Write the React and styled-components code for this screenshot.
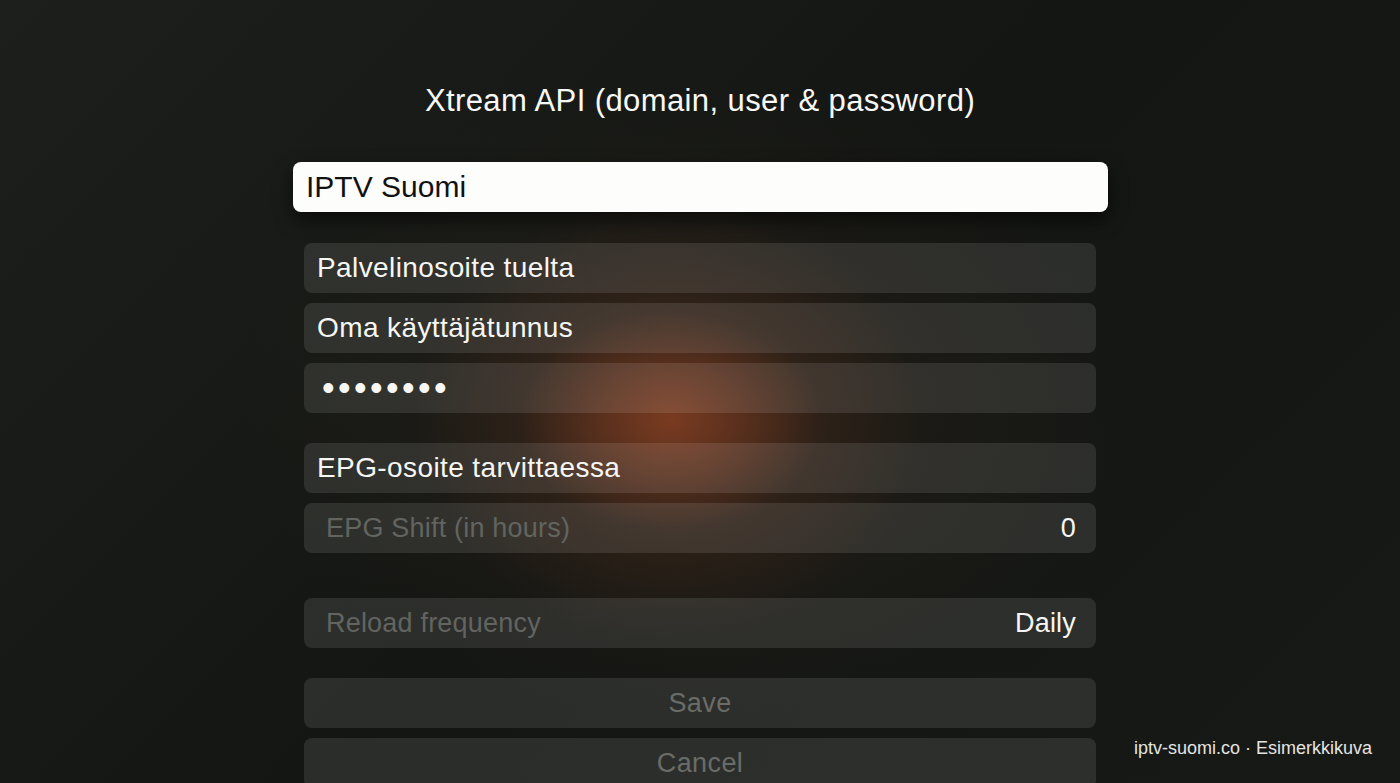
import styled, { createGlobalStyle } from "styled-components";

const GlobalStyle = createGlobalStyle`
  html, body {
    margin: 0;
    padding: 0;
    background: #151714;
  }
  * {
    box-sizing: border-box;
  }
`;

const Screen = styled.div`
  position: relative;
  width: 100%;
  height: 783px;
  overflow: hidden;
  display: flex;
  flex-direction: column;
  align-items: center;
  padding-top: 83px;
  font-family: "Liberation Sans", Arial, sans-serif;
  background:
    radial-gradient(ellipse 150px 110px at 670px 420px, rgba(175, 75, 38, 0.5), transparent 100%),
    radial-gradient(ellipse 260px 220px at 670px 420px, rgba(150, 75, 40, 0.3), transparent 100%),
    radial-gradient(ellipse 450px 320px at 690px 400px, rgba(90, 55, 35, 0.18), transparent 100%),
    linear-gradient(135deg, #1c1f1b 0%, #141613 50%, #171916 100%);
`;

const Title = styled.h1`
  margin: 0;
  font-size: 31px;
  line-height: 36px;
  font-weight: 400;
  letter-spacing: 0.4px;
  color: #f8f8f6;
`;

const Form = styled.div`
  width: 792px;
  display: flex;
  flex-direction: column;
  margin-top: 43px;
`;

const Group = styled.div`
  display: flex;
  flex-direction: column;
  gap: 10px;
  margin-top: ${({ $space }) => $space || 0}px;
`;

const Field = styled.div`
  height: 50px;
  border-radius: 8px;
  display: flex;
  align-items: center;
  justify-content: ${({ $center }) => ($center ? "center" : "space-between")};
  padding: 0 20px 0 ${({ $dim }) => ($dim ? 22 : 13)}px;
  background: rgba(255, 255, 255, 0.1);
  font-size: ${({ $dim }) => ($dim ? 27 : 28)}px;
  letter-spacing: ${({ $dim }) => ($dim ? 0.2 : 0.4)}px;
  color: ${({ $dim }) => ($dim ? "#626460" : "#f6f6f4")};
`;

const FocusedField = styled.div`
  height: 50px;
  margin: 0 -12px 0 -11px;
  border-radius: 8px;
  display: flex;
  align-items: center;
  padding: 0 13px;
  background: #fdfdfc;
  box-shadow: 0 8px 18px rgba(0, 0, 0, 0.55);
  font-size: 30px;
  color: #111;
`;

const Value = styled.span`
  color: #f6f6f4;
`;

const Dots = styled.span`
  font-size: 36px;
  letter-spacing: 3.4px;
  margin-left: 5px;
  line-height: 1;
`;

const Button = styled(Field)`
  font-size: 27px;
  color: #6a6c68;
  padding: 0;
`;

const Footer = styled.div`
  position: absolute;
  right: 28px;
  bottom: 24px;
  font-size: 18px;
  color: #e4e4e2;
`;

export default function App() {
  return (
    <>
      <GlobalStyle />
      <Screen>
        <Title>Xtream API (domain, user &amp; password)</Title>
        <Form>
          <FocusedField>IPTV Suomi</FocusedField>
          <Group $space={31}>
            <Field>Palvelinosoite tuelta</Field>
            <Field>Oma käyttäjätunnus</Field>
            <Field>
              <Dots>••••••••</Dots>
            </Field>
          </Group>
          <Group $space={30}>
            <Field>EPG-osoite tarvittaessa</Field>
            <Field $dim>
              EPG Shift (in hours)
              <Value>0</Value>
            </Field>
          </Group>
          <Group $space={45}>
            <Field $dim>
              Reload frequency
              <Value>Daily</Value>
            </Field>
          </Group>
          <Group $space={30}>
            <Button $center>Save</Button>
            <Button $center>Cancel</Button>
          </Group>
        </Form>
        <Footer>iptv-suomi.co · Esimerkkikuva</Footer>
      </Screen>
    </>
  );
}
